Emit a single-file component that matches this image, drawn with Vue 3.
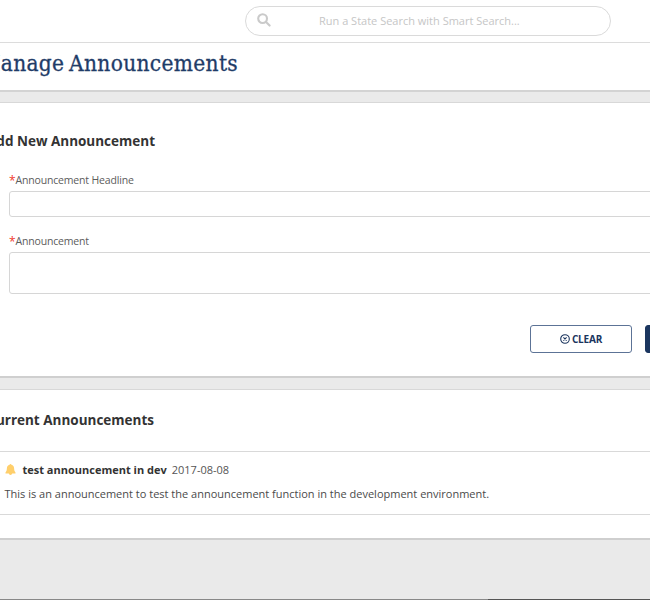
<script setup>
import { ref } from 'vue'

const query = ref('')
const headline = ref('')
const body = ref('')
const announcements = [
  {
    title: 'test announcement in dev',
    date: '2017-08-08',
    text: 'This is an announcement to test the announcement function in the development environment.',
  },
]
</script>

<template>
  <div class="page">
    <header class="top">
      <label class="search">
        <svg class="search-icon" viewBox="0 0 14 14">
          <circle cx="5.6" cy="5.6" r="4.4" />
          <path d="M9 9l3.6 3.6" />
        </svg>
        <input v-model="query" placeholder="Run a State Search with Smart Search..." />
      </label>
    </header>
    <div class="titlebar"><h1>Manage Announcements</h1></div>

    <section class="card form-card">
      <h2 class="add">Add New Announcement</h2>
      <div class="label"><span>*</span>Announcement Headline</div>
      <input v-model="headline" class="field" />
      <div class="label second"><span>*</span>Announcement</div>
      <textarea v-model="body" class="field area"></textarea>
      <div class="actions">
        <button class="clear">
          <svg viewBox="0 0 10 10">
            <circle cx="5" cy="5" r="4.3" />
            <path d="M3.4 3.4l3.2 3.2M6.6 3.4L3.4 6.6" />
          </svg>
          <span>CLEAR</span>
        </button>
        <button class="save" aria-label="Save"></button>
      </div>
    </section>

    <section class="card list-card">
      <h2 class="current">Current Announcements</h2>
      <article v-for="a in announcements" :key="a.title" class="item">
        <div class="line">
          <svg class="bell" viewBox="0 0 10 11">
            <path d="M5 0c.6 0 .9.3.9.8C7.700 1.200 8.500 2.600 8.600 4.300C8.700 6.300 9 7.500 10 8.400V9.400H0V8.400C1 7.500 1.300 6.300 1.400 4.300C1.500 2.600 2.300 1.200 4.100.8C4.100.3 4.400 0 5 0zM3.300 9.300h3.400C6.600 10.500 5.800 11 5 11S3.400 10.500 3.300 9.300z" />
          </svg>
          <strong>{{ a.title }}</strong>
          <time>{{ a.date }}</time>
        </div>
        <p>{{ a.text }}</p>
      </article>
    </section>
    <footer class="foot"><i></i></footer>
  </div>
</template>

<style>
body { background: #eaeaea; }
</style>

<style scoped>
* { box-sizing: border-box; }
.page {
  display: flex;
  flex-direction: column;
  width: 650px;
  height: 600px;
  overflow: hidden;
  background: #eaeaea;
  color: #333;
  font-family: "Open Sans", sans-serif;
}
.top {
  height: 43px;
  padding: 6px 0 0 245px;
  background: #fff;
  border-bottom: 1px solid #dcdcdc;
}
.search {
  display: flex;
  align-items: center;
  width: 366px;
  height: 30px;
  padding-left: 11px;
  border: 1px solid #dadada;
  border-radius: 15px;
}
.search-icon {
  width: 14px;
  height: 14px;
  margin-top: -2px;
  fill: none;
  stroke: #cacaca;
  stroke-width: 2.1;
  stroke-linecap: round;
}
.search input {
  width: 290px;
  margin: -2px 0 0 48px;
  padding: 0;
  border: 0;
  outline: 0;
  background: none;
  font: 11px "Open Sans", sans-serif;
}
.search input::placeholder { color: #c6c6c6; }
.titlebar {
  display: flex;
  justify-content: flex-end;
  align-items: center;
  height: 49px;
  padding: 0 412px 8px 0;
  background: #fff;
  border-bottom: 2px solid #d3d3d3;
}
h1 {
  margin: 0;
  color: #1f3c68;
  font: 400 22.5px/30px "DejaVu Serif Condensed", "DejaVu Serif", serif;
  font-stretch: condensed;
  letter-spacing: 0.3px;
  word-spacing: -2px;
  -webkit-text-stroke: 0.3px #1f3c68;
  white-space: nowrap;
}
.card {
  background: #fff;
  border-top: 1px solid #d8d8d8;
  border-bottom: 2px solid #cfcfcf;
}
.form-card {
  height: 276px;
  margin-top: 10px;
  padding-top: 28px;
}
h2 {
  display: flex;
  justify-content: flex-end;
  margin: 0;
  font-size: 13.5px;
  font-weight: 700;
  line-height: 20px;
  white-space: nowrap;
}
.add { width: 155px; }
.current { width: 154px; }
.label {
  display: flex;
  height: 16px;
  margin: 21px 0 0 9px;
  color: #5c5c5c;
  font-size: 10.5px;
  line-height: 16px;
  letter-spacing: -0.17px;
}
.label span { width: 6.5px; color: #f0392b; font-size: 12px; line-height: 17px; }
.label.second { margin-top: 16px; }
.field {
  display: block;
  width: 660px;
  height: 26px;
  margin: 3px 0 0 8.6px;
  border: 1px solid #d6d6d6;
  border-radius: 3px;
  background: #fff;
  outline: 0;
  resize: none;
}
.area { height: 42px; }
.actions {
  display: flex;
  gap: 12.5px;
  margin: 31px 0 0 530px;
}
button {
  flex: none;
  display: flex;
  align-items: center;
  justify-content: center;
  width: 102px;
  height: 28px;
  padding: 0;
  border: 1px solid #5c7396;
  border-radius: 3px;
  background: #fff;
  color: #1b355e;
  font: 700 10px "Open Sans", sans-serif;
}
.clear svg {
  width: 10px;
  height: 10px;
  margin-right: 2px;
  fill: none;
  stroke: #1b355e;
  stroke-width: 1.1;
}
.clear span { letter-spacing: -0.2px; }
.save { background: #1b365f; border-color: #1b365f; }
.list-card {
  height: 151px;
  margin-top: 11px;
  padding-top: 20px;
}
.item {
  height: 64px;
  margin-top: 21px;
  padding: 9px 0 0 4.5px;
  border-top: 1px solid #d9d9d9;
  border-bottom: 1px solid #d9d9d9;
}
.line {
  display: flex;
  align-items: center;
  height: 17px;
  font-size: 11px;
  white-space: nowrap;
}
.bell { width: 11px; height: 11px; fill: #ffcf6b; }
.line strong { margin-left: 7px; }
.line time { margin-left: 5px; color: #555; }
.item p {
  margin: 8px 0 0;
  color: #4a4a4a;
  font-size: 11px;
  line-height: 16px;
  white-space: nowrap;
}
.foot {
  display: flex;
  height: 1px;
  margin-top: auto;
  background: #555;
}
.foot i { width: 488px; background: #888; }
</style>
